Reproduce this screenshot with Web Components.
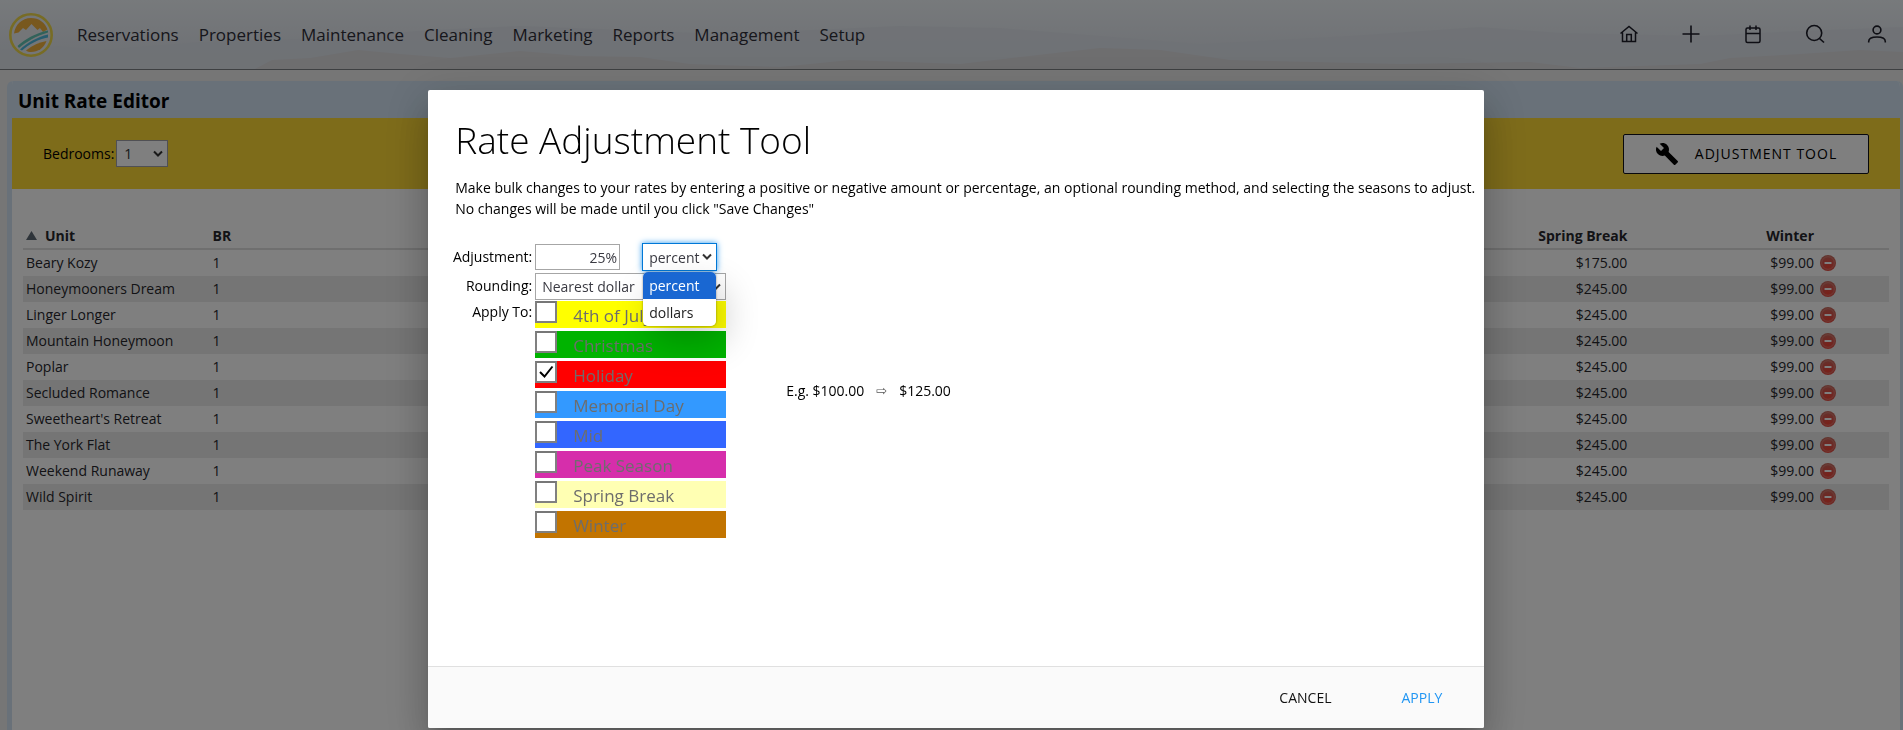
<!DOCTYPE html>
<html lang="en">
<head>
<meta charset="utf-8">
<title>Unit Rate Editor</title>
<style>
  html, body { margin: 0; height: 100%; }
  body {
    background: #ececec;
    color: #1c1c1c;
    font: 14px/21px "Open Sans", "Noto Sans", sans-serif;
    overflow: hidden;
  }
</style>
</head>
<body>
<rate-app></rate-app>

<script>
const define = (name, html, setup) => {
  const template = document.createElement('template');
  template.innerHTML = html;
  customElements.define(name, class extends HTMLElement {
    constructor() {
      super();
      this.attachShadow({ mode: 'open' }).append(template.content.cloneNode(true));
      if (setup) setup(this.shadowRoot, this);
    }
  });
};

const chevron = `url("data:image/svg+xml,%3Csvg xmlns='http://www.w3.org/2000/svg' width='10' height='8' viewBox='0 0 10 8'%3E%3Cpath d='M1 1.5 5 5.5 9 1.5' fill='none' stroke='%23333' stroke-width='2'/%3E%3C/svg%3E")`;

define('brand-logo', `
  <style>:host { display: block; width: 44px; height: 44px; } svg { display: block; }</style>
  <svg width="44" height="44" viewBox="0 0 44 44" aria-label="Home">
    <circle cx="22" cy="22" r="20.7" fill="#e9edf0" stroke="#efd84a" stroke-width="2.6"/>
    <path d="M5 20.5C6 12 13 5 22 5c8 0 14 4.500 16.500 11.500L34 19l-3-4-2.500 2L22.500 11 17 17l-3-2-4.500 4.500Z" fill="#f0b13c"/>
    <path d="M8.500 33C16 26 27 20 39 17.500v2C27 23 17 29 10 35Z" fill="#62c4b4"/>
    <path d="M11 36.500C18 30 28 24 39 21.500v3C30 26 20 31 13 37.500Z" fill="#4fb9dd"/>
    <path d="M17 37.500C24 32 31 29 37.500 28 35 35 29 39 22 39c-2 0-3.500-.5-5-1.500Z" fill="#f0b13c"/>
  </svg>`);

define('app-header', `
  <style>
    :host { display: block; height: 69px; border-bottom: 1px solid #7c8084; position: relative; background: linear-gradient(#eff4f8, #e2e7ee 60%, #dde3ea); }
    .hills { position: absolute; inset: 0; width: 100%; height: 100%; }
    .bar { position: relative; display: flex; align-items: center; height: 69px; padding: 0 16px 0 9px; }
    nav { display: flex; gap: 20px; margin-left: 24px; flex: 1; }
    nav a { color: #2e2e38; font-size: 17px; line-height: 24px; font-weight: 500; text-decoration: none; white-space: nowrap; }
    .tools { display: flex; gap: 42px; }
    .tools button { width: 20px; height: 20px; padding: 0; border: 0; background: none; color: #1c1c28; display: block; margin-bottom: 2px; }
    svg { display: block; }
  </style>
  <svg class="hills" viewBox="0 0 1903 69" preserveAspectRatio="none" aria-hidden="true">
    <path d="M0 50 60 46 100 50 200 42 330 38 430 30 520 26 600 29 720 34 900 26 1000 28 1200 44 1350 36 1480 27 1560 33 1700 36 1800 31 1903 27V69H0Z" fill="#dfe4eb" opacity=".8"/>
    <path d="M255 69 272 60 310 58 358 50 400 54 450 58 520 51 580 56 640 57 690 64 780 67 850 60 960 64 1100 48 1160 50 1230 60 1400 64 1530 62 1580 68 1700 64 1730 58 1800 54 1860 50 1903 52V69Z" fill="#dcdcdf"/>
  </svg>
  <div class="bar">
    <brand-logo></brand-logo>
    <nav>
      <a href="#">Reservations</a><a href="#">Properties</a><a href="#">Maintenance</a><a href="#">Cleaning</a>
      <a href="#">Marketing</a><a href="#">Reports</a><a href="#">Management</a><a href="#">Setup</a>
    </nav>
    <div class="tools">
      <button aria-label="Home"><svg width="20" height="20" viewBox="0 0 20 20" fill="none" stroke="currentColor" stroke-width="1.500"><path d="M1.500 9.500 10 2.500l8.500 7M3.500 8.500v9h13v-9M7.700 17.500v-7h4.600v7"/></svg></button>
      <button aria-label="Add"><svg width="20" height="20" viewBox="0 0 20 20" fill="none" stroke="currentColor" stroke-width="1.600"><path d="M10 1.500v17M1.500 10h17"/></svg></button>
      <button aria-label="Calendar"><svg width="20" height="20" viewBox="0 0 20 20" fill="none" stroke="currentColor" stroke-width="1.500"><rect x="3" y="4" width="14" height="14.500" rx="1.500"/><path d="M3 9.500h14M7 1.500V6M13 1.500V6"/></svg></button>
      <button aria-label="Search"><svg width="20" height="20" viewBox="0 0 20 20" fill="none" stroke="currentColor" stroke-width="1.600"><circle cx="9.200" cy="9" r="7.500"/><path d="m14.500 14.500 4.500 4"/></svg></button>
      <button aria-label="Account"><svg width="20" height="20" viewBox="0 0 20 20" fill="none" stroke="currentColor" stroke-width="1.600"><circle cx="10" cy="6" r="3.900"/><path d="M1.700 18.500v-1c0-3 3-4.500 8.300-4.500s8.300 1.500 8.300 4.500v1"/></svg></button>
    </div>
  </div>`);

define('editor-panel', `
  <style>
    :host { display: block; box-sizing: border-box; margin: 11px 0 0 7px; min-height: calc(100vh - 81px); border: solid #d2e3f2; border-width: 0 3px 0 5px; border-radius: 6px 6px 0 0; background: #fff; overflow: hidden; }
    h1 { margin: 0; padding: 0 6px; background: #d2e3f2; color: #000; font-size: 19px; line-height: 40px; height: 37px; }
    .toolbar { height: 71px; background: #fdd835; display: flex; align-items: center; justify-content: space-between; padding: 0 31px; }
    .body { padding: 33px 11px 0; }
  </style>
  <h1><slot name="title"></slot></h1>
  <div class="toolbar"><slot name="toolbar"></slot></div>
  <div class="body"><slot></slot></div>`);

define('bedroom-filter', `
  <style>
    :host { display: flex; align-items: center; gap: 2px; color: #000; }
    select { appearance: none; width: 52px; height: 27px; border: 1px solid #a0a0a8; border-radius: 0; padding: 0 7px; color: #333; font: inherit; background: #fff ${chevron} no-repeat right 4px center; }
  </style>
  <label for="br">Bedrooms:</label>
  <select id="br"><option>1</option></select>`);

define('tool-button', `
  <style>
    button { box-sizing: border-box; width: 246px; height: 40px; display: flex; align-items: center; justify-content: center; gap: 16px; border: 1px solid #101018; border-radius: 2px; background: #fff; color: #000; font: inherit; letter-spacing: 1px; text-transform: uppercase; }
  </style>
  <button><svg width="24" height="24" viewBox="0 0 24 24"><path d="M22.700 19l-9.100-9.100c.9-2.300.4-5-1.500-6.900-2-2-5-2.400-7.400-1.300L9 6 6 9 1.600 4.700C.4 7.100.9 10.100 2.900 12.100c1.900 1.900 4.600 2.400 6.900 1.500l9.100 9.100c.4.4 1 .4 1.400 0l2.300-2.300c.5-.4.5-1.100.1-1.400z"/></svg><slot></slot></button>`);

define('rate-table', `
  <style>
    :host { display: block; }
    table { width: 100%; table-layout: fixed; border-collapse: collapse; color: #26262c; }
    th { height: 26px; padding: 0 3px; text-align: left; border-bottom: 2px solid #dedede; }
    td { height: 26px; padding: 0 3px; line-height: 24px; }
    tbody tr:nth-child(even) { background: #ebebeb; }
    th.r, td.r { text-align: right; padding-right: 75px; }
    td.x { padding-right: 53px; }
    .cell { display: flex; justify-content: flex-end; align-items: center; gap: 6px; }
    .sort { margin-right: 8px; }
    button { border: 0; padding: 0; background: none; width: 16px; height: 16px; }
    svg { display: inline-block; vertical-align: 1px; }
    button svg { display: block; }
  </style>
  <table>
    <colgroup><col style="width:10%"><col style="width:10%"><col style="width:60%"><col style="width:10%"><col style="width:10%"></colgroup>
    <thead><tr>
      <th><svg class="sort" width="11" height="9" viewBox="0 0 11 9"><path d="M5.500 0 11 9H0Z" fill="#5d6874"/></svg>Unit</th>
      <th>BR</th><th></th><th class="r">Spring Break</th><th class="r">Winter</th>
    </tr></thead>
    <tbody></tbody>
  </table>`, root => {
  const units = ['Beary Kozy', 'Honeymooners Dream', 'Linger Longer', 'Mountain Honeymoon', 'Poplar', 'Secluded Romance', "Sweetheart's Retreat", 'The York Flat', 'Weekend Runaway', 'Wild Spirit'];
  root.querySelector('tbody').innerHTML = units.map((unit, i) => `<tr>
    <td>${unit}</td><td>1</td><td></td><td class="r">${i ? '$245.00' : '$175.00'}</td>
    <td class="r x"><div class="cell">$99.00<button aria-label="Remove ${unit}"><svg width="16" height="16" viewBox="0 0 16 16">
      <defs><radialGradient id="g" cy=".75" r=".7"><stop offset="0" stop-color="#f04434"/><stop offset=".5" stop-color="#dc5048"/><stop offset="1" stop-color="#c4685c"/></radialGradient></defs>
      <circle cx="8" cy="8" r="8" fill="url(#g)"/><circle cx="8" cy="8" r="6.300" fill="none" stroke="#e08a80" stroke-width=".7"/>
      <rect x="4.500" y="7" width="7" height="2" rx=".5" fill="#fff"/></svg></button></div></td></tr>`).join('');
});

define('modal-dialog', `
  <style>
    :host { position: fixed; inset: 0; box-sizing: border-box; display: grid; grid-template-columns: 45fr 111fr 44fr; padding: 90px 0 2px; background: rgba(0, 0, 0, .5); }
    section { grid-column: 2; display: flex; flex-direction: column; background: #fff; color: #000; border-radius: 2px; box-shadow: 0 24px 38px 3px rgba(0,0,0,.14), 0 9px 46px 8px rgba(0,0,0,.12), 0 11px 15px -7px rgba(0,0,0,.2); }
    .content { flex: 1; padding: 24px 4px 0 27px; }
    h2 { margin: 0; font-size: 37px; line-height: 51px; font-weight: 300; }
    footer { box-sizing: border-box; height: 62px; display: flex; align-items: center; justify-content: flex-end; gap: 70px; padding: 0 42px; border-top: 1px solid #e0e0e0; background: #fafafa; border-radius: 0 0 2px 2px; }
  </style>
  <section role="dialog" aria-label="Rate Adjustment Tool">
    <div class="content"><h2><slot name="title"></slot></h2><slot></slot></div>
    <footer><slot name="actions"></slot></footer>
  </section>`);

define('flat-button', `
  <style>
    :host { display: block; }
    button { border: 0; padding: 0; background: none; color: var(--tone, #111); font: inherit; text-transform: uppercase; }
  </style>
  <button><slot></slot></button>`);

define('season-list', `
  <style>
    :host { display: grid; gap: 3px; }
    label { display: flex; gap: 16px; height: 27px; font-size: 17px; line-height: 27px; color: #6d6d6d; }
    label span { padding-top: 1px; }
    input { appearance: none; box-sizing: border-box; width: 22px; height: 22px; margin: 0; border: 2px solid #808080; border-top-color: #777; background: #fff; flex: none; }
    input:checked { background: #fff url("data:image/svg+xml,%3Csvg xmlns='http://www.w3.org/2000/svg' width='18' height='18' viewBox='0 0 18 18'%3E%3Cpath d='M3 9l4.500 4.500 8-10' fill='none' stroke='%23000' stroke-width='2'/%3E%3C/svg%3E") center no-repeat; }
  </style>`, root => {
  [['4th of July', '#ffff00'], ['Christmas', '#00b300'], ['Holiday', '#ff0000'], ['Memorial Day', '#3399ff'], ['Mid', '#3366ff'],
   ['Peak Season', '#d62eab'], ['Spring Break', '#ffffb3'], ['Winter', '#c27400']].forEach(([name, colour]) => {
    const label = document.createElement('label');
    label.style.background = colour;
    label.innerHTML = `<input type="checkbox"${name === 'Holiday' ? ' checked' : ''}><span>${name}</span>`;
    root.append(label);
  });
});

define('adjustment-form', `
  <style>
    :host { display: flex; align-items: center; gap: 60px; margin-top: 24px; }
    form { display: grid; grid-template-columns: 77px 191px; column-gap: 3px; row-gap: 1px; }
    form > label, .name { text-align: right; justify-self: end; line-height: 28px; white-space: nowrap; }
    .name { line-height: 21px; }
    .pair { display: flex; align-items: center; gap: 22px; }
    input, select { box-sizing: border-box; border: 1px solid #a6a6a6; border-radius: 0; color: #3a3a42; font: inherit; background: #fff; }
    input { width: 85px; height: 26px; padding: 0 2px; text-align: right; }
    select { appearance: none; background: #fff ${chevron} no-repeat right 4px center; }
    .unit { position: relative; }
    .unit select { display: block; width: 75px; height: 28px; padding: 0 6px; border-color: #0078d7; box-shadow: 0 0 6px #2f9bf0; }
    .rounding { width: 100%; height: 27px; padding: 0 6px; margin-top: 1px; }
    ul { position: absolute; z-index: 1; top: 29px; left: 1px; width: 73px; margin: 0; padding: 0; list-style: none; background: #fff; border-radius: 5px; overflow: hidden; }
    .menu-shadow { position: absolute; top: 29px; left: 1px; width: 73px; height: 54px; border-radius: 5px; box-shadow: 0 0 2px rgba(0,0,0,.5), 8px 16px 36px rgba(0,0,0,.2); }
    li { padding: 0 6px; line-height: 27px; color: #222; }
    li[aria-selected=true] { background: #1967d2; color: #fff; }
    .example { display: flex; gap: 12px; }
    .example i { font: 13px/21px "DejaVu Sans", sans-serif; color: #555; }
  </style>
  <form>
    <label for="amount">Adjustment:</label>
    <div class="pair">
      <input id="amount" value="25%">
      <div class="unit">
        <select aria-label="Unit"><option>percent</option><option>dollars</option></select>
        <div class="menu-shadow"></div>
        <ul role="listbox"><li role="option" aria-selected="true">percent</li><li role="option">dollars</li></ul>
      </div>
    </div>
    <label for="rounding">Rounding:</label>
    <select class="rounding" id="rounding"><option>Nearest dollar</option></select>
    <span class="name">Apply To:</span>
    <season-list></season-list>
  </form>
  <div class="example"><span>E.g. $100.00</span><i>⇨</i><span>$125.00</span></div>`);

define('rate-app', `
  <style>:host { display: block; } p { margin: 12px 0 0; }</style>
  <app-header></app-header>
  <editor-panel>
    <span slot="title">Unit Rate Editor</span>
    <bedroom-filter slot="toolbar"></bedroom-filter>
    <tool-button slot="toolbar">Adjustment Tool</tool-button>
    <rate-table></rate-table>
  </editor-panel>
  <modal-dialog>
    <span slot="title">Rate Adjustment Tool</span>
    <p>Make bulk changes to your rates by entering a positive or negative amount or percentage, an optional rounding method, and selecting the seasons to adjust.<br>No changes will be made until you click "Save Changes"</p>
    <adjustment-form></adjustment-form>
    <flat-button slot="actions">Cancel</flat-button>
    <flat-button slot="actions" style="--tone:#2196f3">Apply</flat-button>
  </modal-dialog>`);
</script>
</body>
</html>
